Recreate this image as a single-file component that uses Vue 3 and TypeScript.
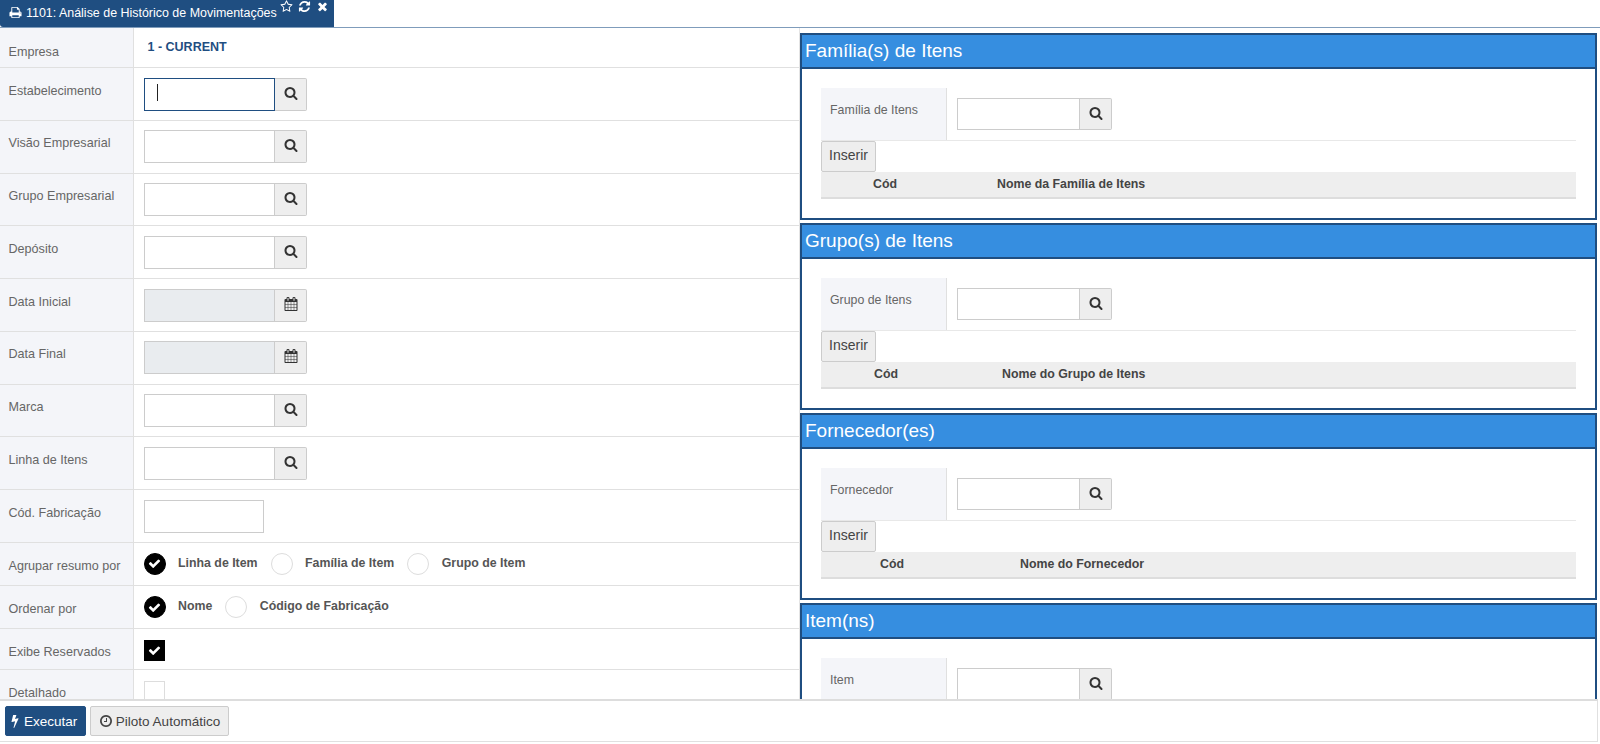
<script setup lang="ts">
const ICONS = {
  search: 'M1216 832q0-185-131.500-316.500t-316.500-131.500-316.500 131.500-131.500 316.500 131.500 316.500 316.500 131.500 316.500-131.500 131.500-316.500zm512 832q0 52-38 90t-90 38q-54 0-90-38l-343-342q-179 124-399 124-143 0-273.500-55.500t-225-150-150-225-55.500-273.500 55.500-273.500 150-225 225-150 273.500-55.500 273.500 55.500 225 150 150 225 55.500 273.500q0 220-124 399l343 343q37 37 37 90z',
  calendar: 'M192 1664h288v-288h-288v288zm352 0h320v-288h-320v288zm-352-352h288v-320h-288v320zm352 0h320v-320h-320v320zm-352-384h288v-288h-288v288zm736 736h320v-288h-320v288zm-384-736h320v-288h-320v288zm768 736h288v-288h-288v288zm-384-352h320v-320h-320v320zm-352-864v-288q0-13-9.500-22.500t-22.500-9.500h-64q-13 0-22.500 9.500t-9.500 22.500v288q0 13 9.500 22.500t22.500 9.500h64q13 0 22.500-9.500t9.500-22.500zm736 864h288v-320h-288v320zm-384-384h320v-288h-320v288zm384 0h288v-288h-288v288zm32-480v-288q0-13-9.500-22.500t-22.500-9.500h-64q-13 0-22.500 9.500t-9.500 22.500v288q0 13 9.500 22.500t22.500 9.500h64q13 0 22.500-9.500t9.500-22.500zm384-64v1280q0 52-38 90t-90 38h-1408q-52 0-90-38t-38-90v-1280q0-52 38-90t90-38h128v-96q0-66 47-113t113-47h64q66 0 113 47t47 113v96h384v-96q0-66 47-113t113-47h64q66 0 113 47t47 113v96h128q52 0 90 38t38 90z',
  print: 'M448 1536h896v-256h-896v256zm0-640h896v-384h-160q-40 0-68-28t-28-68v-160h-640v640zm1152 64q0-26-19-45t-45-19-45 19-19 45 19 45 45 19 45-19 19-45zm128 0v416q0 13-9.500 22.500t-22.500 9.500h-224v160q0 40-28 68t-68 28h-960q-40 0-68-28t-28-68v-160h-224q-13 0-22.500-9.500t-9.500-22.500v-416q0-79 56.500-135.500t135.500-56.500h64v-544q0-40 28-68t68-28h672q40 0 88 20t76 48l152 152q28 28 48 76t20 88v256h64q79 0 135.500 56.500t56.500 135.500z',
  close: 'M1490 1322q0 40-28 68l-136 136q-28 28-68 28t-68-28l-294-294-294 294q-28 28-68 28t-68-28l-136-136q-28-28-28-68t28-68l294-294-294-294q-28-28-28-68t28-68l136-136q28-28 68-28t68 28l294 294 294-294q28-28 68-28t68 28l136 136q28 28 28 68t-28 68l-294 294 294 294q28 28 28 68z',
  refresh: 'M1639 1056q0 5-1 7-64 268-268 434.500t-478 166.500q-146 0-282.500-55t-243.500-157l-129 129q-19 19-45 19t-45-19-19-45v-448q0-26 19-45t45-19h448q26 0 45 19t19 45-19 45l-137 137q71 66 161 102t187 36q134 0 250-65t186-179q11-17 53-117 8-23 30-23h192q13 0 22.500 9.500t9.500 22.500zm25-800v448q0 26-19 45t-45 19h-448q-26 0-45-19t-19-45 19-45l138-138q-148-137-349-137-134 0-250 65t-186 179q-11 17-53 117-8 23-30 23h-199q-13 0-22.500-9.500t-9.500-22.500v-7q65-268 270-434.500t480-166.500q146 0 284 55.500t245 156.500l130-129q19-19 45-19t45 19 19 45z',
  star: 'M1201 1004l306-297-422-62-189-382-189 382-422 62 306 297-73 421 378-199 377 199zm527-357q0 22-26 48l-363 354 86 500q1 7 1 20 0 50-41 50-19 0-40-12l-449-236-449 236q-22 12-40 12-21 0-31.500-14.500t-10.500-35.500q0-6 2-20l86-500-364-354q-25-27-25-48 0-37 56-46l502-73 225-455q19-41 49-41t49 41l225 455 502 73q56 9 56 46z',
  bolt: 'M1333 566q18 20 7 44l-540 1157q-13 25-42 25-4 0-14-2-17-5-25.500-19t-4.500-30l197-808-406 101q-4 1-12 1-18 0-31-11-18-15-13-39l201-825q4-14 16-23t28-9h328q19 0 32 12.500t13 29.500q0 8-5 18l-171 463 396-98q8-2 12-2 19 0 34 15z',
  clock: 'M1024 544v448q0 14-9 23t-23 9h-320q-14 0-23-9t-9-23v-64q0-14 9-23t23-9h224v-352q0-14 9-23t23-9h64q14 0 23 9t9 23zm416 352q0-148-73-273t-198-198-273-73-273 73-198 198-73 273 73 273 198 198 273 73 273-73 198-198 73-273zm224 0q0 209-103 385.500t-279.500 279.500-385.500 103-385.500-103-279.500-279.500-103-385.500 103-385.500 279.500-279.500 385.500-103 385.500 103 279.500 279.500 103 385.500z',
  check: 'M1671 566q0 40-28 68l-724 724-136 136q-28 28-68 28t-68-28l-136-136-362-362q-28-28-28-68t28-68l136-136q28-28 68-28t68 28l294 295 656-657q28-28 68-28t68 28l136 136q28 28 28 68z',
}

interface FieldRow { label: string; icon?: string; focused?: boolean; disabled?: boolean; plain?: boolean }

const fieldRows: FieldRow[] = [
  { label: 'Estabelecimento', icon: ICONS.search, focused: true },
  { label: 'Visão Empresarial', icon: ICONS.search },
  { label: 'Grupo Empresarial', icon: ICONS.search },
  { label: 'Depósito', icon: ICONS.search },
  { label: 'Data Inicial', icon: ICONS.calendar, disabled: true },
  { label: 'Data Final', icon: ICONS.calendar, disabled: true },
  { label: 'Marca', icon: ICONS.search },
  { label: 'Linha de Itens', icon: ICONS.search },
  { label: 'Cód. Fabricação', plain: true },
]

const radioRows = [
  { label: 'Agrupar resumo por', cls: 'row-group', options: [
    { text: 'Linha de Item', on: true }, { text: 'Família de Item', on: false }, { text: 'Grupo de Item', on: false },
  ] },
  { label: 'Ordenar por', cls: 'row-order', options: [
    { text: 'Nome', on: true }, { text: 'Código de Fabricação', on: false },
  ] },
]

// The last panel runs past the bottom of the scroll area, so only its field shows.
const panels = [
  { title: 'Família(s) de Itens', field: 'Família de Itens', name: 'Nome da Família de Itens', cod: 52, nome: 176 },
  { title: 'Grupo(s) de Itens', field: 'Grupo de Itens', name: 'Nome do Grupo de Itens', cod: 53, nome: 181 },
  { title: 'Fornecedor(es)', field: 'Fornecedor', name: 'Nome do Fornecedor', cod: 59, nome: 199 },
  { title: 'Item(ns)', field: 'Item', name: '', cod: 0, nome: 0 },
]
</script>

<template>
  <div class="page">
    <header class="tabbar">
      <div class="tab">
        <svg class="ic tab-print" viewBox="0 0 1792 1792"><path :d="ICONS.print" /></svg>
        <span class="tab-title">1101: Análise de Histórico de Movimentações</span>
        <span class="tab-actions">
          <svg class="ic" viewBox="0 0 1792 1792"><path :d="ICONS.star" /></svg>
          <svg class="ic" viewBox="0 0 1792 1792"><path :d="ICONS.refresh" /></svg>
          <svg class="ic" viewBox="0 0 1792 1792"><path :d="ICONS.close" /></svg>
        </span>
      </div>
    </header>

    <main class="body">
      <section class="form">
        <div class="row row-company">
          <div class="label">Empresa</div>
          <div class="value company">1 - CURRENT</div>
        </div>

        <div v-for="row in fieldRows" :key="row.label" class="row row-field">
          <div class="label">{{ row.label }}</div>
          <div class="value">
            <div class="input-group" :class="{ 'plain-group': row.plain }">
              <div class="input" :class="{ focused: row.focused, disabled: row.disabled }">
                <span v-if="row.focused" class="caret"></span>
              </div>
              <div v-if="row.icon" class="addon">
                <svg class="ic" viewBox="0 0 1792 1792"><path :d="row.icon" /></svg>
              </div>
            </div>
          </div>
        </div>

        <div v-for="row in radioRows" :key="row.label" class="row" :class="row.cls">
          <div class="label">{{ row.label }}</div>
          <div class="value options">
            <template v-for="opt in row.options" :key="opt.text">
              <span class="radio" :class="{ on: opt.on }">
                <svg v-if="opt.on" class="ic" viewBox="0 0 1792 1792"><path :d="ICONS.check" /></svg>
              </span>
              <span class="opt-text">{{ opt.text }}</span>
            </template>
          </div>
        </div>

        <div class="row row-check">
          <div class="label">Exibe Reservados</div>
          <div class="value">
            <span class="box on"><svg class="ic" viewBox="0 0 1792 1792"><path :d="ICONS.check" /></svg></span>
          </div>
        </div>
        <div class="row row-check">
          <div class="label">Detalhado</div>
          <div class="value"><span class="box"></span></div>
        </div>
      </section>

      <section class="panels">
        <article v-for="p in panels" :key="p.title" class="panel">
          <h2 class="panel-head">{{ p.title }}</h2>
          <div class="panel-body">
            <div class="panel-field">
              <div class="panel-label">{{ p.field }}</div>
              <div class="panel-value">
                <div class="input-group">
                  <div class="input"></div>
                  <div class="addon">
                    <svg class="ic" viewBox="0 0 1792 1792"><path :d="ICONS.search" /></svg>
                  </div>
                </div>
              </div>
            </div>
            <template v-if="p.name">
              <button class="btn insert" type="button">Inserir</button>
              <div class="table-head">
                <span class="th" :style="{ left: p.cod + 'px' }">Cód</span>
                <span class="th" :style="{ left: p.nome + 'px' }">{{ p.name }}</span>
              </div>
            </template>
          </div>
        </article>
      </section>
    </main>

    <footer class="footer">
      <button class="btn primary" type="button">
        <svg class="ic" viewBox="0 0 1792 1792"><path :d="ICONS.bolt" /></svg>
        Executar
      </button>
      <button class="btn auto" type="button">
        <svg class="ic" viewBox="0 0 1792 1792"><path :d="ICONS.clock" /></svg>
        Piloto Automático
      </button>
    </footer>
  </div>
</template>

<style>
html, body { margin: 0; background: #fff; overflow: hidden; }
</style>

<style scoped>
.page {
  width: 1600px;
  height: 744px;
  display: flex;
  flex-direction: column;
  font-family: "Liberation Sans", Arial, sans-serif;
  font-size: 12.35px;
  color: #555;
  overflow: hidden;
}
.ic { display: block; fill: currentColor; }

.tabbar {
  height: 28px;
  box-sizing: border-box;
  border-bottom: 1px solid #7f9cbb;
  flex: none;
}
.tab {
  width: 334px;
  height: 27px;
  box-sizing: border-box;
  background: #1f4e81;
  color: #fff;
  border-bottom-left-radius: 3px;
  display: flex;
  align-items: flex-start;
}
.tab-print { width: 13px; height: 13px; margin: 6px 4px 0 9px; }
.tab-title { font-size: 12.45px; line-height: 14px; margin-top: 6px; white-space: nowrap; }
.tab-actions { display: flex; gap: 5px; margin-left: 3px; }
.tab-actions .ic { width: 13px; height: 13px; }

.body { flex: none; height: 671px; display: flex; overflow: hidden; }
.form { width: 800px; flex: none; box-sizing: border-box; border-right: 1px solid #e4e4e4; }

.row { display: flex; box-sizing: border-box; border-bottom: 1px solid #e0e0e0; }
.label {
  width: 134px;
  flex: none;
  box-sizing: border-box;
  background: #f4f5f9;
  border-right: 1px solid #e0e0e0;
  padding: 15.5px 0 0 8.5px;
  color: #666;
  font-size: 12.6px;
  white-space: nowrap;
}
.value { flex: 1; padding: 9.6px 0 0 9.5px; min-width: 0; }
.row-company { height: 40px; }
.row-company .label { padding-top: 17px; }
.company { color: #1f4e81; font-weight: bold; padding: 11.5px 0 0 13.5px; font-size: 12.5px; }
.row-field { height: 52.75px; }

.input-group { display: flex; width: 163.5px; height: 33px; }
.plain-group { width: 120.5px; }
.input {
  flex: 1;
  position: relative;
  box-sizing: border-box;
  background: #fff;
  border: 1px solid #ccc;
}
.input.focused { border-color: #1f4e81; }
.input.disabled { background: #e9ecef; }
.caret {
  position: absolute;
  left: 12px;
  top: 5px;
  width: 1px;
  height: 17px;
  background: #222;
}
.addon {
  width: 32px;
  flex: none;
  box-sizing: border-box;
  background: #eee;
  border: 1px solid #ccc;
  border-left: none;
  border-radius: 0 2px 2px 0;
  padding-bottom: 3px;
  color: #333;
  display: flex;
  align-items: center;
  justify-content: center;
}
.addon .ic { width: 14px; height: 14px; }

.row-group { height: 43.5px; }
.row-order { height: 43px; }
.row-group .label, .row-order .label { padding-top: 16px; }
.options { display: flex; align-items: flex-start; padding-top: 10px; }
.radio {
  width: 22px;
  height: 22px;
  box-sizing: border-box;
  border-radius: 50%;
  border: 1px solid #ddd;
  flex: none;
  display: flex;
  align-items: center;
  justify-content: center;
  color: #fff;
}
.radio.on { background: #000; border-color: #000; }
.radio .ic, .box .ic { width: 13px; height: 13px; }
.opt-text { font-size: 12.35px; font-weight: bold; margin: 3px 13px 0 12.5px; white-space: nowrap; line-height: 14px; }

.row-check { height: 41px; }
.row-check .label { padding-top: 16px; }
.row-check .value { padding-top: 10.6px; }
.box {
  width: 21px;
  height: 21px;
  box-sizing: border-box;
  border: 1px solid #ddd;
  display: flex;
  align-items: center;
  justify-content: center;
  color: #fff;
}
.box.on { background: #000; border-color: #000; }

.panels { flex: 1; min-width: 0; box-sizing: border-box; padding: 5px 3px 0 0; overflow: hidden; }
.panel {
  height: 187px;
  margin-bottom: 3px;
  box-sizing: border-box;
  border: 2px solid #1f4e81;
}
.panel-head {
  margin: 0;
  height: 34px;
  box-sizing: border-box;
  background: #368ee0;
  border-bottom: 2px solid #1f4e81;
  color: #fff;
  font-size: 19px;
  font-weight: normal;
  line-height: 32px;
  padding-left: 3px;
}
.panel-body { padding: 19px 19px 0 19px; }
.panel-field { display: flex; height: 53px; box-sizing: border-box; border-bottom: 1px solid #e8e8e8; }
.panel-label {
  width: 126px;
  flex: none;
  box-sizing: border-box;
  background: #f4f5f9;
  border-right: 1px solid #e0e0e0;
  padding: 15px 0 0 9px;
  color: #666;
}
.panel-value { padding: 10px 0 0 10px; }
.panel-value .input-group { width: 155px; height: 32px; }
.panel-value .addon { padding-bottom: 2px; }
.table-head {
  position: relative;
  height: 27px;
  box-sizing: border-box;
  background: #eee;
  border-bottom: 2px solid #ddd;
}
.th {
  position: absolute;
  top: 5px;
  font-weight: bold;
  color: #444;
  white-space: nowrap;
}

.btn {
  font-family: inherit;
  font-size: 14px;
  color: #444;
  background: #eee;
  border: 1px solid #ccc;
  border-radius: 2px;
  box-sizing: border-box;
  padding: 0;
  display: flex;
  align-items: center;
  justify-content: center;
}
.insert { width: 55px; height: 31px; display: block; padding-bottom: 3px; }

.footer {
  flex: none;
  height: 43px;
  width: 1598px;
  box-sizing: border-box;
  border-top: 2px solid #ddd;
  border-right: 1px solid #e0e0e0;
  border-bottom: 1px solid #e0e0e0;
  display: flex;
  gap: 4px;
  padding: 5px 0 0 5px;
  align-items: flex-start;
}
.footer .btn { height: 30px; gap: 3px; font-size: 13.5px; }
.footer .ic { width: 14px; height: 14px; }
.footer .primary {
  width: 81px;
  background: #1f4e81;
  border-color: #1f4e81;
  color: #fff;
  justify-content: flex-start;
  padding-left: 2px;
  gap: 2px;
}
.auto { width: 139px; }
</style>
